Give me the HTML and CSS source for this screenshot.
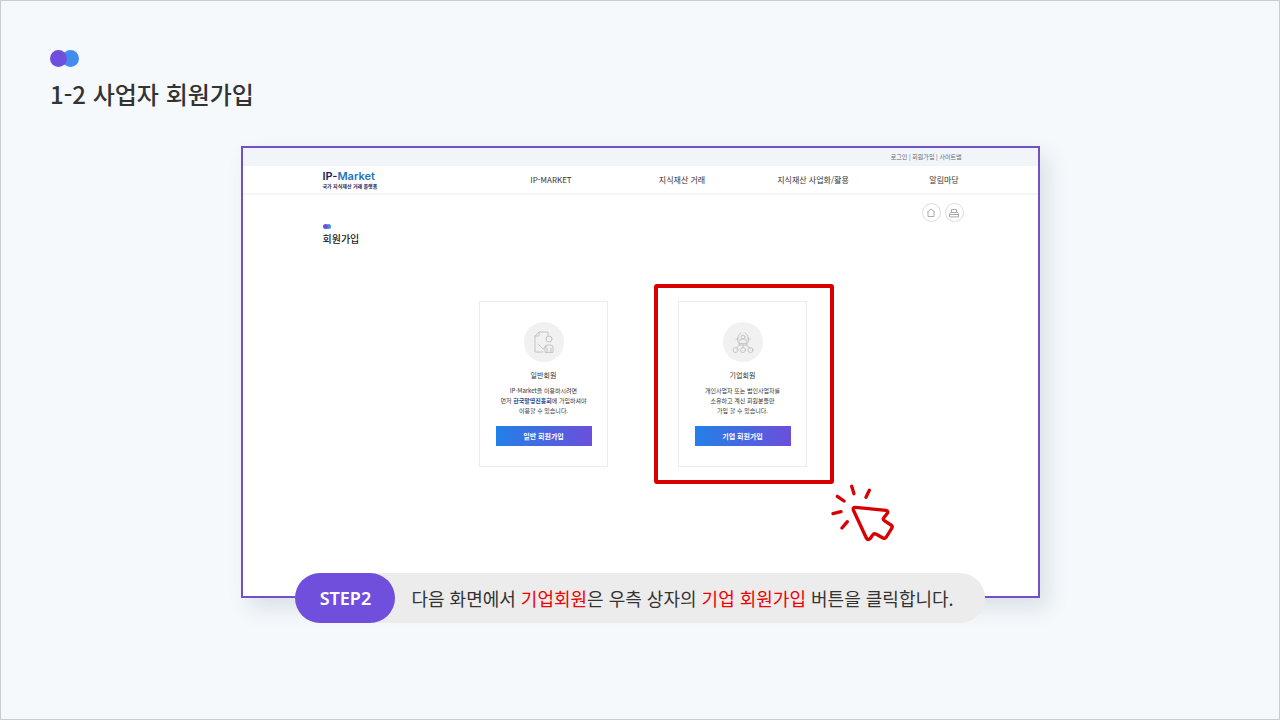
FILE: index.html
```
<!DOCTYPE html>
<html lang="ko">

<head>
    <meta charset="UTF-8">
    <title>1-2 사업자 회원가입</title>
    <link rel="stylesheet" href="styles.css">
</head>

<body>
    <div class="slide">
        <header class="slide-header">
            <div class="dots"><i></i><i></i></div>
            <h1>1-2 사업자 회원가입</h1>
        </header>

        <div class="screen">
            <div class="util">
                <a href="#">로그인</a> | <a href="#">회원가입</a> | <a href="#">사이트맵</a>
            </div>
            <div class="gnb">
                <a class="logo" href="#">
                    <span class="logo-name">IP-<b>Market</b></span>
                    <span class="logo-sub">국가 지식재산 거래 플랫폼</span>
                </a>
                <nav>
                    <a href="#">IP-MARKET</a>
                    <a href="#">지식재산 거래</a>
                    <a href="#">지식재산 사업화/활용</a>
                    <a href="#">알림마당</a>
                </nav>
            </div>
            <main>
                <div class="tools">
                    <button type="button" aria-label="홈">
                        <svg viewBox="0 0 10 10"><path d="M1.500 4 5 1l3.500 3M2 4v4.500h6V4" /></svg>
                    </button>
                    <button type="button" aria-label="인쇄">
                        <svg viewBox="0 0 10 10"><path d="M2.500 4.500v-3h5v3M.5 8.500v-3l1-1h7l1 1v3zM.5 6.500h9" /></svg>
                    </button>
                </div>
                <div class="dots dots-small"><i></i><i></i></div>
                <h2>회원가입</h2>
                <div class="cards">
                    <section class="card">
                        <div class="card-icon">
                            <svg viewBox="0 0 40 40">
                                <path d="M14 30h-3V14l4-4h9v4M15 10v4h-4M14 22l5 5 4-3M14 30h5" />
                                <circle cx="25" cy="17" r="3" />
                                <path d="M21 30v-5q0-2 2-2h3q3 0 3 2v5zM23 30v-4M27 30v-4" />
                            </svg>
                        </div>
                        <h3>일반회원</h3>
                        <p>IP-Market을 이용하시려면<br>먼저 <strong>한국발명진흥회</strong>에 가입하셔야<br>이용할 수 있습니다.</p>
                        <button type="button">일반 회원가입</button>
                    </section>
                    <section class="card">
                        <div class="card-icon">
                            <svg viewBox="0 0 40 40">
                                <circle cx="20" cy="15" r="2" />
                                <path d="M16 21q0-4 4-4t4 4zM15 20a7 7 0 0 1 3-9M22 11a7 7 0 0 1 3 9M13 17h3M24 17h3M16 21v2h8v-2M20 22v4M17 23l-4 3M23 23l4 3" />
                                <circle cx="12.500" cy="28" r="2.500" />
                                <circle cx="20" cy="28" r="2.500" />
                                <circle cx="27.500" cy="28" r="2.500" />
                            </svg>
                        </div>
                        <h3>기업회원</h3>
                        <p>개인사업자 또는 법인사업자를<br>소유하고 계신 회원분들만<br>가입 할 수 있습니다.</p>
                        <button type="button">기업 회원가입</button>
                        <div class="highlight">
                            <svg class="cursor" viewBox="570 640 201 180">
                                <path d="M647 713 738 722Q746 724 742 731L731 745Q728 750 733 753L753 766Q759 770 755 776L739 802Q735 808 729 805L709 794Q702 790 698 796L690 807Q684 813 679 805L640 721Q638 712 647 713Z" />
                                <path d="M635 650l7 22M688 662l-10 21M592 680l20 14M579 732l24-6M622 756l-16 19" />
                            </svg>
                        </div>
                    </section>
                </div>
            </main>
        </div>

        <div class="caption">
            <strong>STEP2</strong>
            <p>다음 화면에서 <em>기업회원</em>은 우측 상자의 <em>기업 회원가입</em> 버튼을 클릭합니다.</p>
        </div>
    </div>
</body>

</html>
```
FILE: styles.css
```
* {
    box-sizing: border-box;
}

body {
    margin: 0;
    color: #333;
    font-family: "Noto Sans CJK KR", sans-serif;
}

h1,
h2,
h3,
p {
    margin: 0;
}

a {
    color: inherit;
    text-decoration: none;
}

button {
    border: 0;
    padding: 0;
    font-family: inherit;
    cursor: pointer;
}

svg {
    fill: none;
    stroke-linecap: round;
    stroke-linejoin: round;
}

.slide {
    min-height: 100vh;
    border: 1px solid #c9cdd2;
    padding: 49px 0;
    background: #f5f9fc;
}

.slide-header {
    padding: 0 49px;
}

.slide-header h1 {
    margin-top: 9px;
    font-size: 24px;
    font-weight: 500;
    line-height: 36px;
}
/*겹친 원 장식*/

.dots {
    display: flex;
}

.dots i {
    width: 17px;
    height: 17px;
    border-radius: 50%;
    background: #6f4fdb;
    z-index: 1;
}

.dots i + i {
    margin-left: -5px;
    background: #418cec;
    z-index: 0;
}

.dots-small i {
    width: 5px;
    height: 5px;
}

.dots-small i + i {
    margin-left: -2px;
}
/*사이트 화면*/

.screen {
    max-width: 799px;
    margin: 34px auto 0;
    border: 2px solid #7052c8;
    background: #fff;
    box-shadow: 8px 10px 20px rgba(40, 60, 80, .13);
}

.util {
    padding: 0 76px 1px;
    background: #f1f5f9;
    color: #666;
    font-size: 6px;
    line-height: 17px;
    text-align: right;
}

.gnb {
    display: flex;
    justify-content: space-between;
    align-items: center;
    height: 29px;
    padding: 0 28px 0 80px;
    border-bottom: 2px solid #f4f5f7;
}

.logo {
    display: flex;
    flex-direction: column;
    color: #1b2560;
}

.logo-name {
    font: 600 11px/12px Inter, sans-serif;
}

.logo-name b {
    color: #1b73bd;
    font-weight: 600;
}

.logo-sub {
    font-size: 5px;
    font-weight: 700;
    line-height: 8px;
}

.gnb nav {
    display: grid;
    grid-template-columns: repeat(4, 1fr);
    width: 524px;
    font-size: 8px;
    line-height: 12px;
    text-align: center;
}

main {
    padding: 8px 74px 129px 80px;
}

.tools {
    display: flex;
    justify-content: flex-end;
    gap: 4px;
}

.tools button {
    display: flex;
    align-items: center;
    justify-content: center;
    width: 19px;
    height: 19px;
    border: 1px solid #ddd;
    border-radius: 50%;
    background: #fff;
}

.tools svg {
    width: 10px;
    height: 10px;
    stroke: #aaa;
    stroke-width: 1;
}

main h2 {
    margin-top: 2px;
    color: #222;
    font-size: 10px;
    font-weight: 500;
    line-height: 16px;
}

.dots-small {
    margin-top: 2px;
}
/*회원 유형 선택*/

.cards {
    display: flex;
    justify-content: center;
    gap: 70px;
    margin-top: 54px;
}

.card {
    display: flex;
    flex-direction: column;
    align-items: center;
    position: relative;
    width: 129px;
    border: 1px solid #ececec;
    padding: 20px 0;
    text-align: center;
}

.card-icon {
    width: 40px;
    height: 40px;
    border-radius: 50%;
    background: #f1f1f1;
}

.card-icon svg {
    display: block;
    stroke: #c4c4c4;
    stroke-width: 1;
}

.card h3 {
    margin-top: 8px;
    font-size: 7px;
    font-weight: 400;
    line-height: 10px;
}

.card p {
    margin-top: 6px;
    font-size: 6px;
    line-height: 10px;
}

.card strong {
    color: #1f4e96;
}

.card > button {
    width: 96px;
    height: 20px;
    margin-top: 10px;
    background: linear-gradient(90deg, #2380e8, #6b4fdb);
    color: #fff;
    font-size: 7px;
    font-weight: 700;
}
/*클릭 위치 표시*/

.highlight {
    position: absolute;
    top: -18px;
    right: -28px;
    bottom: -18px;
    left: -25px;
    border: 4px solid #d90000;
    border-radius: 3px;
}

.cursor {
    position: absolute;
    top: 195px;
    left: 172px;
    width: 67px;
    height: 60px;
    stroke: #d90000;
    stroke-width: 10;
}
/*하단 설명*/

.caption {
    display: flex;
    position: relative;
    width: fit-content;
    margin: -25px auto 0;
    border-radius: 25px;
    padding-right: 31px;
    background: #ececec;
    font-size: 18px;
    line-height: 50px;
}

.caption strong {
    width: 100px;
    margin-right: 16px;
    border-radius: 25px;
    background: #6f4fdb;
    color: #fff;
    font-family: "Noto Sans", sans-serif;
    font-weight: 600;
    text-align: center;
}

.caption em {
    color: #f00000;
    font-style: normal;
}
```
